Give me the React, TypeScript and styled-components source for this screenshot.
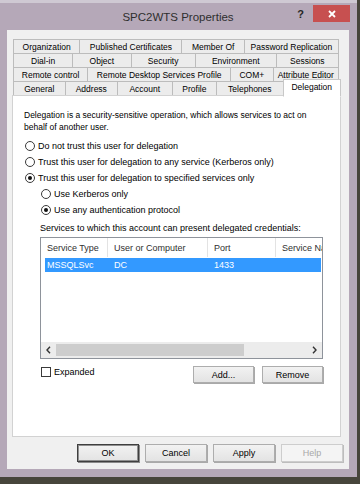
import styled, { createGlobalStyle, css } from "styled-components";

const GlobalStyle = createGlobalStyle`
  html, body {
    margin: 0;
    padding: 0;
  }
  body {
    width: 360px;
    height: 484px;
    overflow: hidden;
    background-color: #47453b;
    font-family: "Liberation Sans", Arial, sans-serif;
    color: #000;
  }
  * {
    box-sizing: border-box;
  }
`;

const Window = styled.div`
  display: flex;
  flex-direction: column;
  width: 357px;
  height: 477px;
  padding: 0 8px 8px 7px;
  background-color: #b5a8b8;
  border-top: 3px solid #cfc9d3;
`;

const TitleBar = styled.div`
  display: grid;
  grid-template-columns: 1fr auto 1fr;
  align-items: center;
  height: 27px;
`;

const Title = styled.div`
  grid-column: 2;
  font-size: 11.5px;
  color: #2e2e2e;
`;

const Controls = styled.div`
  grid-column: 3;
  justify-self: end;
  align-self: start;
  display: flex;
  align-items: center;
  gap: 9px;
  margin-top: 2px;
  margin-right: -1px;
`;

const HelpMark = styled.span`
  font-size: 11px;
  font-weight: bold;
  color: #262626;
`;

const CloseButton = styled.div`
  display: flex;
  align-items: center;
  justify-content: center;
  width: 37px;
  height: 17px;
  background-color: #c75050;
`;

const Client = styled.div`
  flex: 1;
  display: flex;
  flex-direction: column;
  padding: 9px 8px 7px 5px;
  background-color: #f0f0f0;
`;

const TabStrip = styled.div`
  display: flex;
  flex-direction: column;
  margin: 0 2px 0 1px;
`;

const TabRow = styled.div`
  display: flex;
  height: 15px;
  & + & {
    margin-top: -1px;
  }
`;

const Tab = styled.div<{ $grow: number; $active?: boolean }>`
  flex: ${({ $grow }) => $grow} 1 0;
  display: flex;
  align-items: center;
  justify-content: center;
  border: 1px solid #bcbcbc;
  background-color: #ececec;
  font-size: 8.5px;
  white-space: nowrap;
  & + & {
    margin-left: -1px;
  }
  ${({ $active }) =>
    $active &&
    css`
      position: relative;
      z-index: 2;
      height: 18px;
      margin: -2px -2px 0 -1px;
      padding-bottom: 2px;
      background-color: #fff;
      border-color: #c8c8c8;
      border-bottom-color: #fff;
    `}
`;

const Panel = styled.div`
  flex: 1;
  display: flex;
  flex-direction: column;
  margin-top: -1px;
  padding: 13px 17px 0 11px;
  background-color: #fff;
  border: 1px solid #d2d2d2;
  font-size: 9px;
`;

const Description = styled.p`
  margin: 0;
  font-size: 8.5px;
  line-height: 12px;
  white-space: nowrap;
`;

const RadioGroup = styled.div`
  display: flex;
  flex-direction: column;
  margin-top: 5px;
`;

const RadioOption = styled.label`
  display: flex;
  align-items: center;
  gap: 3px;
  height: 16px;
  padding-left: 1px;
  white-space: nowrap;
`;

const RadioCircle = styled.span<{ $checked?: boolean }>`
  display: flex;
  align-items: center;
  justify-content: center;
  width: 10px;
  height: 10px;
  border: 1px solid #3a3a3a;
  border-radius: 50%;
  background-color: #fff;
  &::after {
    content: "";
    display: ${({ $checked }) => ($checked ? "block" : "none")};
    width: 4px;
    height: 4px;
    border-radius: 50%;
    background-color: #111;
  }
`;

const Indented = styled.div`
  display: flex;
  flex-direction: column;
  margin-left: 16px;
`;

const ListCaption = styled.div`
  height: 16px;
  margin-top: 2px;
  line-height: 16px;
  white-space: nowrap;
`;

const ListView = styled.div`
  display: flex;
  flex-direction: column;
  height: 122px;
  margin-top: 1px;
  border: 1px solid #8e939b;
  overflow: hidden;
`;

const HeaderRow = styled.div`
  display: flex;
  height: 19px;
  flex-shrink: 0;
`;

const HeaderCell = styled.div<{ $width: number }>`
  flex: 0 0 ${({ $width }) => $width}px;
  display: flex;
  align-items: center;
  padding-left: 6px;
  border-right: 1px solid #e3e3e3;
  color: #2f2f2f;
  white-space: nowrap;
  overflow: hidden;
`;

const ItemRow = styled.div<{ $selected?: boolean }>`
  display: flex;
  height: 14px;
  margin: 1px 1px 0 4px;
  background-color: ${({ $selected }) => ($selected ? "#3399ff" : "transparent")};
  color: ${({ $selected }) => ($selected ? "#fff" : "#000")};
`;

const ItemCell = styled.div<{ $width: number; $first?: boolean }>`
  flex: 0 0 ${({ $width }) => $width}px;
  display: flex;
  align-items: center;
  padding-left: ${({ $first }) => ($first ? 2 : 6)}px;
  white-space: nowrap;
`;

const ListFill = styled.div`
  flex: 1;
`;

const ScrollBar = styled.div`
  display: flex;
  align-items: center;
  height: 16px;
  flex-shrink: 0;
  background-color: #ececec;
`;

const ScrollArrow = styled.div`
  display: flex;
  align-items: center;
  justify-content: center;
  width: 15px;
  height: 100%;
`;

const ScrollTrack = styled.div`
  flex: 1;
  height: 12px;
`;

const ScrollThumb = styled.div`
  height: 100%;
  background-color: #cdcdcd;
`;

const FooterRow = styled.div`
  display: flex;
  align-items: flex-start;
  height: 17px;
  margin-top: 7px;
`;

const CheckOption = styled.label`
  display: flex;
  align-items: center;
  gap: 3px;
  margin: 1px 0 0 1px;
`;

const CheckBox = styled.span`
  width: 10px;
  height: 10px;
  border: 1px solid #3a3a3a;
  background-color: #fff;
`;

const ButtonGroup = styled.div<{ $gap: number }>`
  display: flex;
  gap: ${({ $gap }) => $gap}px;
  height: 100%;
  margin-left: auto;
`;

const DialogButton = styled.button<{ $width: number; $default?: boolean }>`
  width: ${({ $width }) => $width}px;
  height: 100%;
  padding: 0;
  border: 1px solid #adadad;
  border-radius: 0;
  background: linear-gradient(#f2f2f2, #e3e3e3);
  box-shadow: 1px 1px 0 #a9a9a9;
  font-family: "Liberation Sans", Arial, sans-serif;
  font-size: 9px;
  color: #000;
  ${({ $default }) =>
    $default &&
    css`
      border-color: #3f3f3f;
      box-shadow: inset 0 0 0 1px #8f8f8f, 1px 1px 0 #8a8a8a;
    `}
  &:disabled {
    color: #a8a8a8;
    border-color: #cdcdcd;
    background: #f4f4f4;
    box-shadow: 1px 1px 0 #bdbdbd;
  }
`;

const DialogFooter = styled.div`
  display: flex;
  justify-content: flex-end;
  gap: 6px;
  height: 18px;
  margin: 7px -2px 0 0;
`;

const tabRows = [
  [
    { text: "Organization", grow: 66 },
    { text: "Published Certificates", grow: 102 },
    { text: "Member Of", grow: 62 },
    { text: "Password Replication", grow: 94 },
  ],
  [
    { text: "Dial-in", grow: 59 },
    { text: "Object", grow: 58 },
    { text: "Security", grow: 64 },
    { text: "Environment", grow: 81 },
    { text: "Sessions", grow: 62 },
  ],
  [
    { text: "Remote control", grow: 74 },
    { text: "Remote Desktop Services Profile", grow: 143 },
    { text: "COM+", grow: 42 },
    { text: "Attribute Editor", grow: 65 },
  ],
  [
    { text: "General", grow: 51 },
    { text: "Address", grow: 52 },
    { text: "Account", grow: 54 },
    { text: "Profile", grow: 44 },
    { text: "Telephones", grow: 66 },
    { text: "Delegation", grow: 57 },
  ],
];

const columns = [
  { text: "Service Type", width: 67 },
  { text: "User or Computer", width: 100 },
  { text: "Port", width: 68 },
  { text: "Service Name", width: 90 },
];

const services = [{ type: "MSSQLSvc", host: "DC", port: "1433" }];

function Chevron({ flip }: { flip?: boolean }) {
  return (
    <svg width="5" height="8" viewBox="0 0 5 8">
      <polyline
        points={flip ? "1,0.8 4,4 1,7.2" : "4,0.8 1,4 4,7.2"}
        fill="none"
        stroke="#333"
        strokeWidth="1.4"
      />
    </svg>
  );
}

function App() {
  return (
    <>
      <GlobalStyle />
      <Window>
        <TitleBar>
          <Title>SPC2WTS Properties</Title>
          <Controls>
            <HelpMark>?</HelpMark>
            <CloseButton>
              <svg width="8" height="8" viewBox="0 0 8 8">
                <path d="M1 1 L7 7 M7 1 L1 7" stroke="#fff" strokeWidth="1.8" />
              </svg>
            </CloseButton>
          </Controls>
        </TitleBar>
        <Client>
          <TabStrip>
            {tabRows.map((row, i) => (
              <TabRow key={i}>
                {row.map((tab) => (
                  <Tab key={tab.text} $grow={tab.grow} $active={tab.text === "Delegation"}>
                    {tab.text}
                  </Tab>
                ))}
              </TabRow>
            ))}
          </TabStrip>
          <Panel>
            <Description>
              Delegation is a security-sensitive operation, which allows services to act on
              <br />
              behalf of another user.
            </Description>
            <RadioGroup>
              <RadioOption>
                <RadioCircle />
                Do not trust this user for delegation
              </RadioOption>
              <RadioOption>
                <RadioCircle />
                Trust this user for delegation to any service (Kerberos only)
              </RadioOption>
              <RadioOption>
                <RadioCircle $checked />
                Trust this user for delegation to specified services only
              </RadioOption>
            </RadioGroup>
            <Indented>
              <RadioOption>
                <RadioCircle />
                Use Kerberos only
              </RadioOption>
              <RadioOption>
                <RadioCircle $checked />
                Use any authentication protocol
              </RadioOption>
              <ListCaption>Services to which this account can present delegated credentials:</ListCaption>
              <ListView>
                <HeaderRow>
                  {columns.map((col) => (
                    <HeaderCell key={col.text} $width={col.width}>
                      {col.text}
                    </HeaderCell>
                  ))}
                </HeaderRow>
                {services.map((s) => (
                  <ItemRow key={s.type} $selected>
                    <ItemCell $width={63} $first>
                      {s.type}
                    </ItemCell>
                    <ItemCell $width={100}>{s.host}</ItemCell>
                    <ItemCell $width={68}>{s.port}</ItemCell>
                  </ItemRow>
                ))}
                <ListFill />
                <ScrollBar>
                  <ScrollArrow>
                    <Chevron />
                  </ScrollArrow>
                  <ScrollTrack>
                    <ScrollThumb style={{ width: "75%" }} />
                  </ScrollTrack>
                  <ScrollArrow>
                    <Chevron flip />
                  </ScrollArrow>
                </ScrollBar>
              </ListView>
              <FooterRow>
                <CheckOption>
                  <CheckBox />
                  Expanded
                </CheckOption>
                <ButtonGroup $gap={8}>
                  <DialogButton $width={61}>Add...</DialogButton>
                  <DialogButton $width={61}>Remove</DialogButton>
                </ButtonGroup>
              </FooterRow>
            </Indented>
          </Panel>
          <DialogFooter>
            <DialogButton $width={62} $default>
              OK
            </DialogButton>
            <DialogButton $width={62}>Cancel</DialogButton>
            <DialogButton $width={62}>Apply</DialogButton>
            <DialogButton $width={62} disabled>
              Help
            </DialogButton>
          </DialogFooter>
        </Client>
      </Window>
    </>
  );
}

export default App;
